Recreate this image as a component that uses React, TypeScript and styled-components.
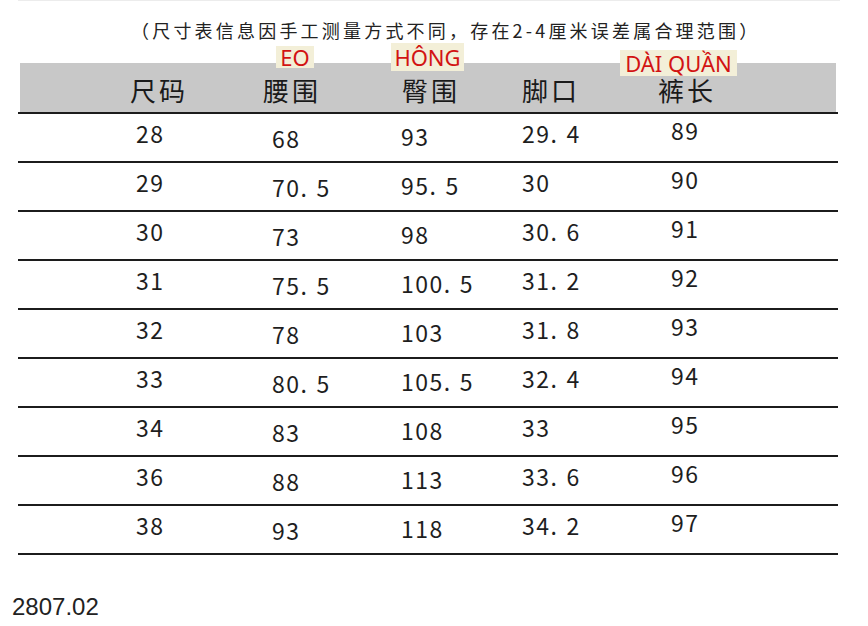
import React from "react";
import styled, { createGlobalStyle } from "styled-components";

const GlobalStyle = createGlobalStyle`
  html, body {
    margin: 0;
    padding: 0;
    background: #fff;
  }
  body {
    font-family: "Noto Sans CJK SC", "Noto Sans", sans-serif;
    color: #222;
  }
`;

const headers = ["尺码", "腰围", "臀围", "脚口", "裤长"];

const rows = [
  ["28", "68", "93", "29.4", "89"],
  ["29", "70.5", "95.5", "30", "90"],
  ["30", "73", "98", "30.6", "91"],
  ["31", "75.5", "100.5", "31.2", "92"],
  ["32", "78", "103", "31.8", "93"],
  ["33", "80.5", "105.5", "32.4", "94"],
  ["34", "83", "108", "33", "95"],
  ["36", "88", "113", "33.6", "96"],
  ["38", "93", "118", "34.2", "97"],
];

// the photo has every column sitting at a slightly different height
const colShift = [13, 18, 16, 13, 10];

const labels = [
  { text: "EO", left: 276, top: 46, width: 38, height: 22 },
  { text: "HÔNG", left: 391, top: 43, width: 73, height: 28 },
  { text: "DÀI QUẦN", left: 620, top: 50, width: 117, height: 26 },
];

const Page = styled.div`
  position: relative;
  width: 868px;
  height: 626px;
  overflow: hidden;
`;

const Title = styled.div`
  margin-left: 18px;
  width: 822px;
  height: 63px;
  border-top: 1px solid #ececec;
  box-sizing: border-box;
  padding: 17px 0 0 113px;
  font-size: 18px;
  line-height: 24px;
  letter-spacing: 3.2px;
  color: #222;
  white-space: nowrap;
`;

const Table = styled.div`
  margin-left: 18px;
  width: 820px;
`;

const HeadRow = styled.div`
  border-bottom: 2px solid #1c1c1c;
`;

const HeadBand = styled.div`
  margin: 0 2px;
  height: 49px;
  background: #c8c8c8;
  display: grid;
  grid-template-columns: 133px 139px 120px 136px 1fr;
  align-items: center;
  padding-left: 110px;
  padding-top: 4px;
  box-sizing: border-box;
`;

const HeadCell = styled.div`
  font-size: 26px;
  line-height: 26px;
  letter-spacing: 3px;
  color: #1a1a1a;
`;

const Row = styled.div`
  height: 47px;
  border-bottom: 2px solid #1c1c1c;
  display: grid;
  grid-template-columns: 136px 129px 121px 149px 1fr;
  align-items: start;
  padding-left: 118px;
`;

const Cell = styled.div<{ $dy: number }>`
  padding-top: ${({ $dy }) => $dy - 5}px;
  font-size: 23px;
  line-height: 23px;
  letter-spacing: 1.5px;
  color: #1e1e1e;
`;

const Dot = styled.span`
  margin-right: 8px;
`;

const Label = styled.div`
  position: absolute;
  display: flex;
  align-items: center;
  justify-content: center;
  background: #f3efd8;
  color: #d21313;
  font-family: "Noto Sans", "Open Sans", sans-serif;
  font-size: 22px;
  line-height: 1;
  white-space: nowrap;
`;

const Footer = styled.div`
  margin: 38px 0 0 12px;
  font-family: "Liberation Sans", Arial, sans-serif;
  font-size: 24px;
  color: #222;
`;

const Num = ({ value }: { value: string }) => {
  const [whole, frac] = value.split(".");
  if (frac === undefined) return <>{value}</>;
  return (
    <>
      {whole}
      <Dot>.</Dot>
      {frac}
    </>
  );
};

export default function App() {
  return (
    <Page>
      <GlobalStyle />
      <Title>（尺寸表信息因手工测量方式不同，存在2-4厘米误差属合理范围）</Title>
      <Table>
        <HeadRow>
          <HeadBand>
            {headers.map((h) => (
              <HeadCell key={h}>{h}</HeadCell>
            ))}
          </HeadBand>
        </HeadRow>
        {rows.map((r) => (
          <Row key={r[0]}>
            {r.map((v, i) => (
              <Cell key={i} $dy={colShift[i]}>
                <Num value={v} />
              </Cell>
            ))}
          </Row>
        ))}
      </Table>
      <Footer>2807.02</Footer>
      {labels.map((l) => (
        <Label
          key={l.text}
          style={{ left: l.left, top: l.top, width: l.width, height: l.height }}
        >
          {l.text}
        </Label>
      ))}
    </Page>
  );
}
